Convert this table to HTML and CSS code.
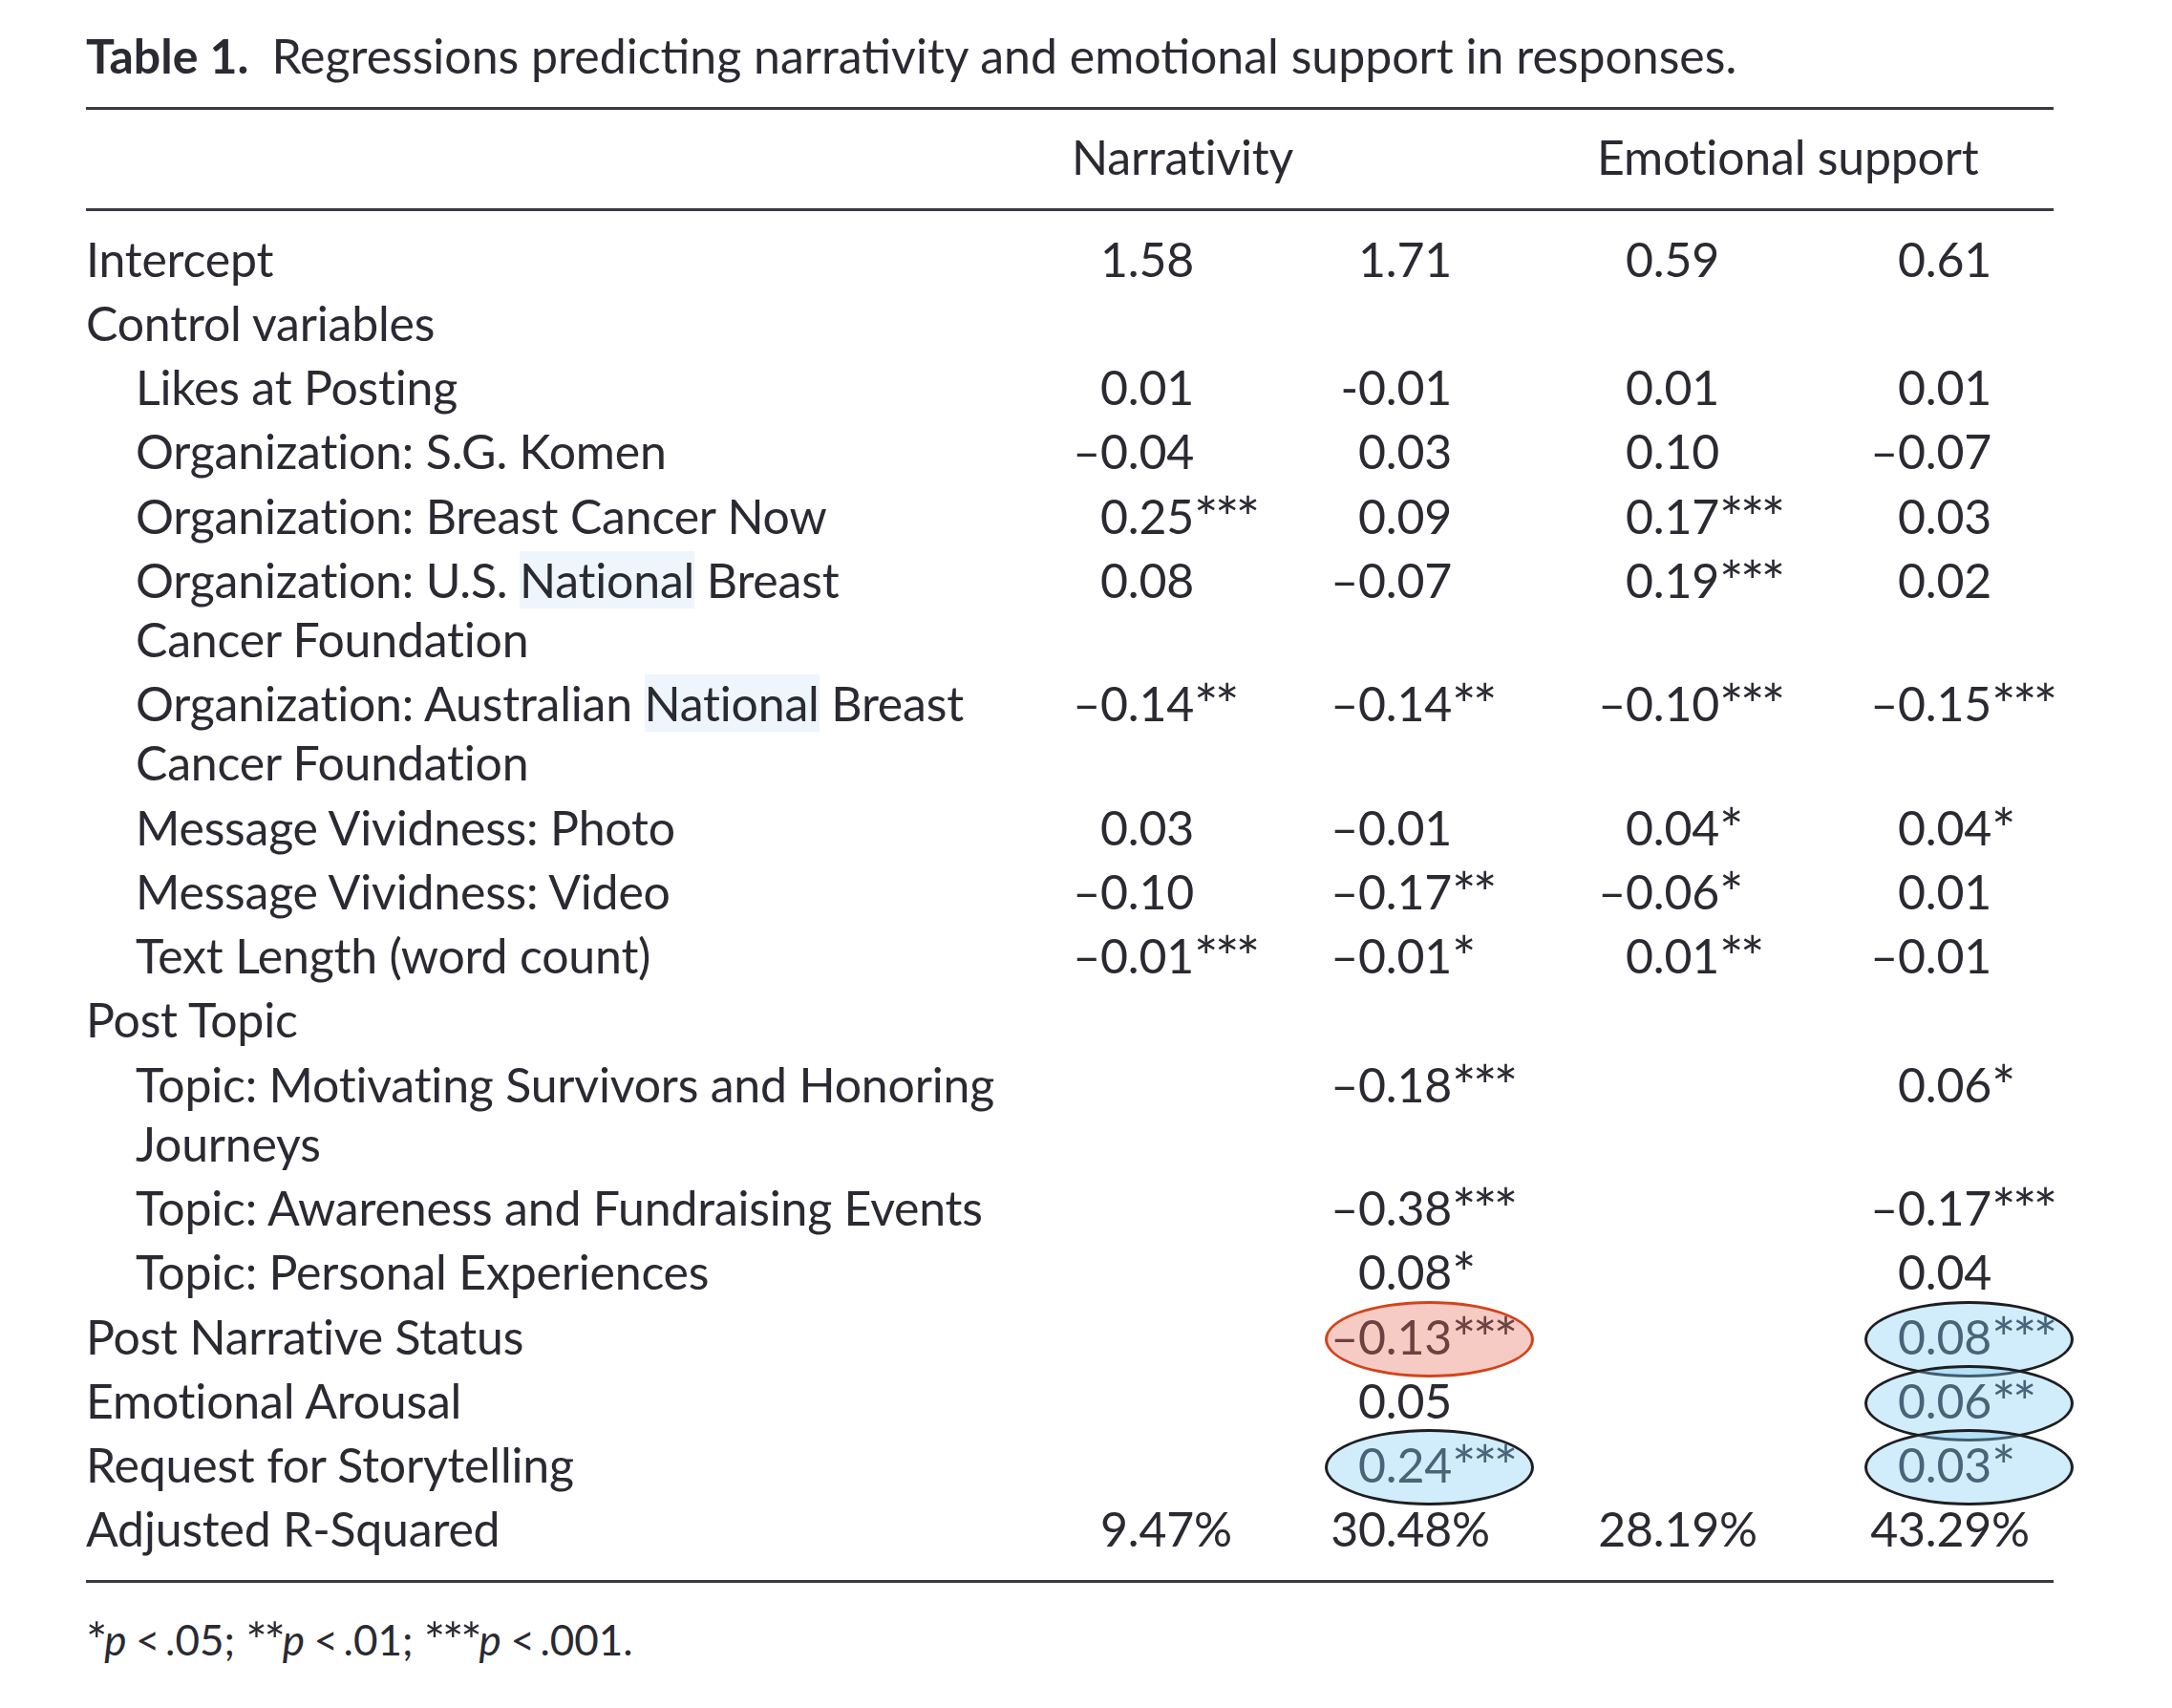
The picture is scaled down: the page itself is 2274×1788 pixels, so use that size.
FILE: index.html
```html
<!DOCTYPE html>
<html lang="en">
<head>
<meta charset="utf-8">
<title>Table 1</title>
<link rel="stylesheet" href="styles.css">
</head>
<body>
<div class="page">
  <h1 class="caption"><b>Table 1.</b><span class="cap-text">Regressions predicting narrativity and emotional support in responses.</span></h1>
  <table class="reg">
    <colgroup>
      <col class="c-label"><col class="c1"><col class="c2"><col class="c3"><col class="c4">
    </colgroup>
    <thead>
      <tr>
        <th></th>
        <th colspan="2">Narrativity</th>
        <th colspan="2">Emotional support</th>
      </tr>
    </thead>
    <tbody>
      <tr class="first"><td class="lab">Intercept</td><td>1.58</td><td>1.71</td><td>0.59</td><td>0.61</td></tr>
      <tr><td class="lab">Control variables</td><td></td><td></td><td></td><td></td></tr>
      <tr><td class="lab sub">Likes at Posting</td><td>0.01</td><td><span class="m">-</span>0.01</td><td>0.01</td><td>0.01</td></tr>
      <tr><td class="lab sub">Organization: S.G. Komen</td><td><span class="m">–</span>0.04</td><td>0.03</td><td>0.10</td><td><span class="m">–</span>0.07</td></tr>
      <tr><td class="lab sub">Organization: Breast Cancer Now</td><td>0.25<span class="sig">***</span></td><td>0.09</td><td>0.17<span class="sig">***</span></td><td>0.03</td></tr>
      <tr><td class="lab sub">Organization: U.S. <span class="sel">National</span> Breast<br>Cancer Foundation</td><td>0.08</td><td><span class="m">–</span>0.07</td><td>0.19<span class="sig">***</span></td><td>0.02</td></tr>
      <tr><td class="lab sub">Organization: Australian <span class="sel">National</span> Breast<br>Cancer Foundation</td><td><span class="m">–</span>0.14<span class="sig">**</span></td><td><span class="m">–</span>0.14<span class="sig">**</span></td><td><span class="m">–</span>0.10<span class="sig">***</span></td><td><span class="m">–</span>0.15<span class="sig">***</span></td></tr>
      <tr><td class="lab sub">Message Vividness: Photo</td><td>0.03</td><td><span class="m">–</span>0.01</td><td>0.04<span class="sig">*</span></td><td>0.04<span class="sig">*</span></td></tr>
      <tr><td class="lab sub">Message Vividness: Video</td><td><span class="m">–</span>0.10</td><td><span class="m">–</span>0.17<span class="sig">**</span></td><td><span class="m">–</span>0.06<span class="sig">*</span></td><td>0.01</td></tr>
      <tr><td class="lab sub">Text Length (word count)</td><td><span class="m">–</span>0.01<span class="sig">***</span></td><td><span class="m">–</span>0.01<span class="sig">*</span></td><td>0.01<span class="sig">**</span></td><td><span class="m">–</span>0.01</td></tr>
      <tr><td class="lab">Post Topic</td><td></td><td></td><td></td><td></td></tr>
      <tr><td class="lab sub">Topic: Motivating Survivors and Honoring<br>Journeys</td><td></td><td><span class="m">–</span>0.18<span class="sig">***</span></td><td></td><td>0.06<span class="sig">*</span></td></tr>
      <tr><td class="lab sub">Topic: Awareness and Fundraising Events</td><td></td><td><span class="m">–</span>0.38<span class="sig">***</span></td><td></td><td><span class="m">–</span>0.17<span class="sig">***</span></td></tr>
      <tr><td class="lab sub">Topic: Personal Experiences</td><td></td><td>0.08<span class="sig">*</span></td><td></td><td>0.04</td></tr>
      <tr><td class="lab">Post Narrative Status</td><td></td><td class="ring red"><span class="m">–</span>0.13<span class="sig">***</span></td><td></td><td class="ring blue">0.08<span class="sig">***</span></td></tr>
      <tr><td class="lab">Emotional Arousal</td><td></td><td>0.05</td><td></td><td class="ring blue">0.06<span class="sig">**</span></td></tr>
      <tr><td class="lab">Request for Storytelling</td><td></td><td class="ring blue">0.24<span class="sig">***</span></td><td></td><td class="ring blue">0.03<span class="sig">*</span></td></tr>
      <tr class="last"><td class="lab">Adjusted R-Squared</td><td>9.47%</td><td><span class="m">3</span>0.48%</td><td><span class="m">2</span>8.19%</td><td><span class="m">4</span>3.29%</td></tr>
    </tbody>
  </table>
  <p class="note"><span class="sig">*</span><i>p</i>&#8201;&lt;&#8201;.05; <span class="sig">**</span><i>p</i>&#8201;&lt;&#8201;.01; <span class="sig">***</span><i>p</i>&#8201;&lt;&#8201;.001.</p>
</div>
</body>
</html>
```

FILE: styles.css
```css
html, body {
  margin: 0;
  padding: 0;
  background: #ffffff;
}

body {
  font-family: Lato, "Open Sans", "Noto Sans", sans-serif;
  color: #2a2a32;
}

.page {
  width: 2060px;
  padding: 27px 0 40px 90px;
}

.caption {
  margin: 0 0 23px;
  font-size: 50px;
  line-height: 62px;
  font-weight: 400;
  white-space: nowrap;
}

.caption b {
  font-weight: 700;
}

.cap-text {
  margin-left: 24px;
}

.reg {
  width: 2060px;
  table-layout: fixed;
  border-collapse: separate;
  border-spacing: 0;
  border-top: 3px solid #3a3a42;
  border-bottom: 3px solid #3a3a42;
  font-size: 50px;
  line-height: 62px;
  letter-spacing: -0.2px;
}

.c-label { width: 1030px; }
.c1 { width: 270px; }
.c2 { width: 280px; }
.c3 { width: 285px; }
.c4 { width: 195px; }

.reg th {
  font-weight: 400;
  text-align: left;
  padding: 17.65px 0 23.35px 2px;
  border-bottom: 3px solid #3a3a42;
  white-space: nowrap;
}

.reg td {
  padding: 2.65px 0 2.65px 32px;
  vertical-align: top;
  white-space: nowrap;
}

.reg td.lab {
  padding-left: 0;
}

.reg td.lab.sub {
  padding-left: 52px;
}

.reg tr.first td {
  padding-top: 18.65px;
}

.reg tr.last td {
  padding-bottom: 22.65px;
}

.m {
  display: inline-block;
  width: 0;
  direction: rtl;
  white-space: nowrap;
}

.sig {
  display: inline-block;
  font-size: 1.2em;
  line-height: 0;
  position: relative;
  top: 5px;
  letter-spacing: -0.06em;
}

.sel {
  background: #eef5fc;
}

.ring {
  position: relative;
}

.ring::after {
  content: "";
  position: absolute;
  left: -3px;
  top: -3px;
  width: 219px;
  height: 80px;
  box-sizing: border-box;
  border-radius: 50%;
  border: 3px solid #1e1e22;
}

.ring.blue::after {
  background: rgba(128, 205, 245, 0.36);
}

.ring.red::after {
  background: rgba(226, 112, 92, 0.36);
  border-color: #d2441c;
}

.note {
  margin: 33px 0 0;
  font-size: 44px;
  line-height: 52px;
  white-space: nowrap;
}

.note .sig {
  top: 4px;
}

.note i {
  margin-right: 4px;
}
```
